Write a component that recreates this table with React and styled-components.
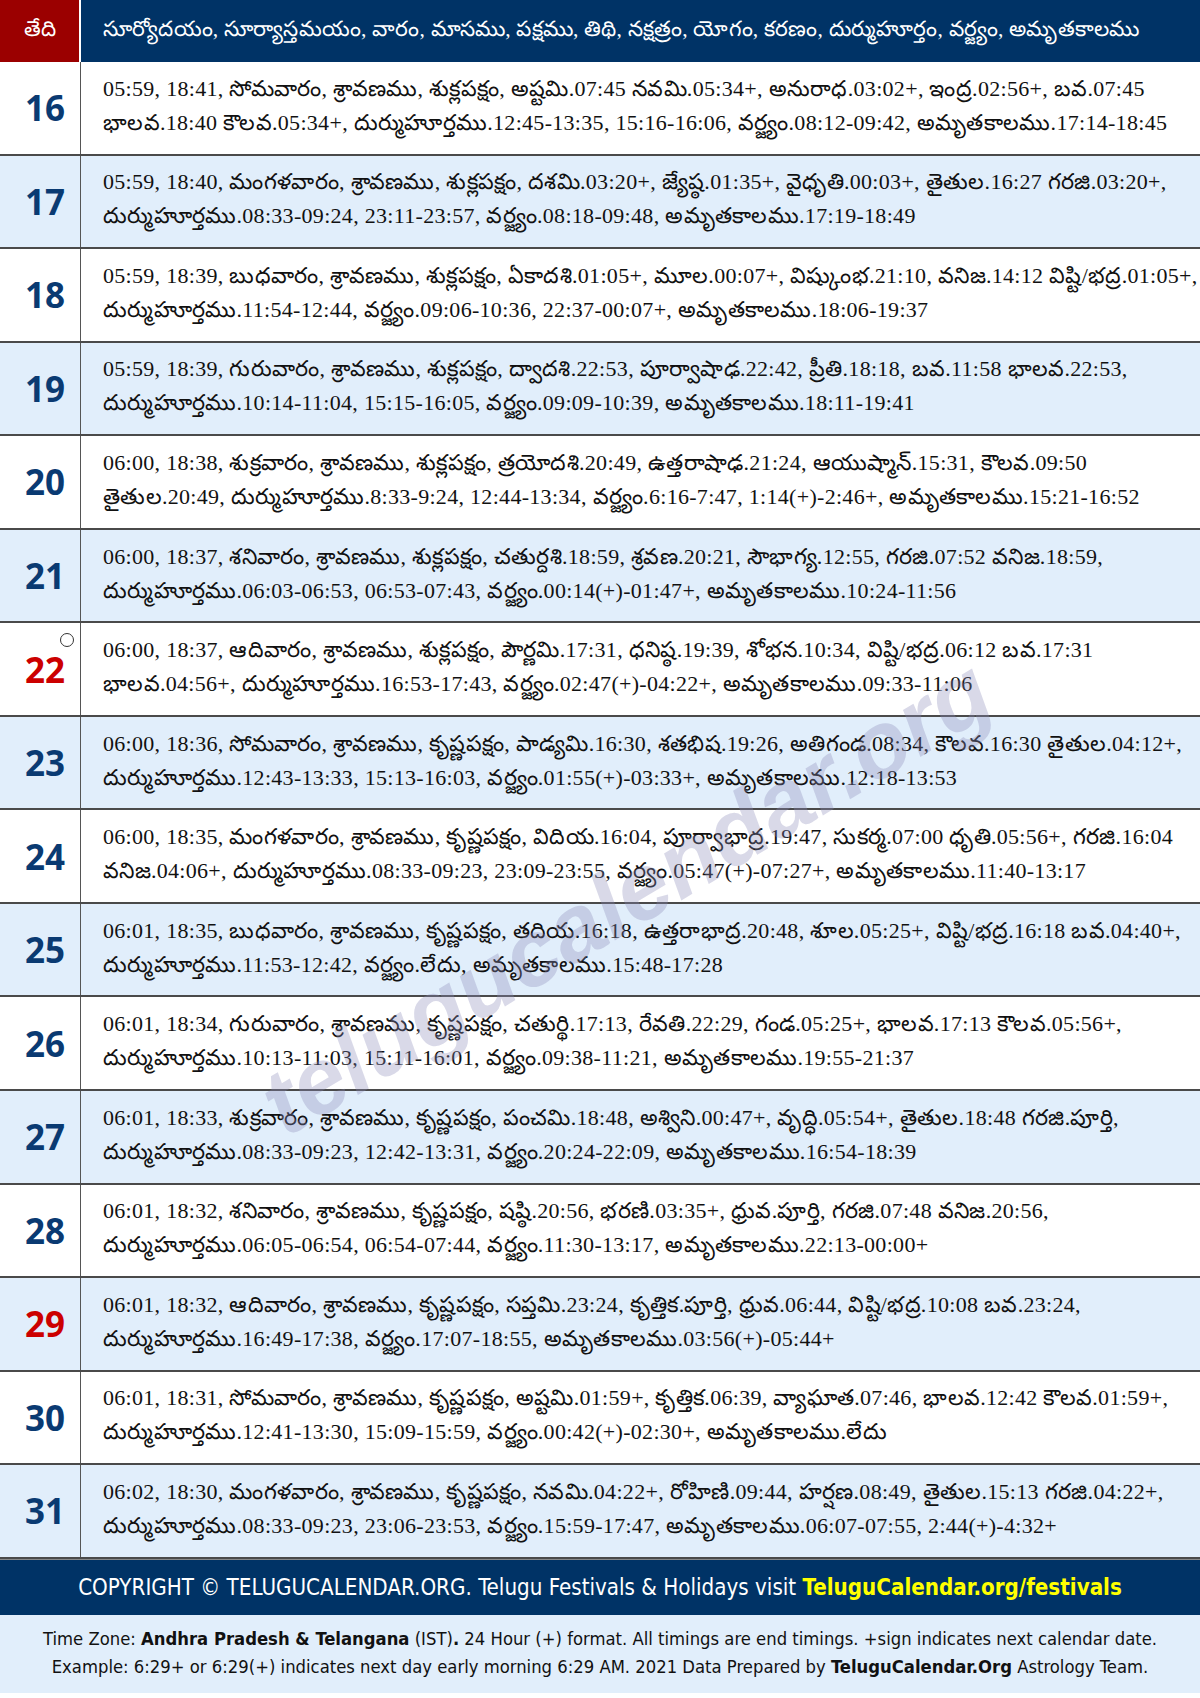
import React from "react";
import styled, { createGlobalStyle } from "styled-components";

const Global = createGlobalStyle`
  html, body { margin: 0; padding: 0; background: #ffffff; }
  body { width: 1200px; }
  * { box-sizing: border-box; }
`;

const Page = styled.div`
  position: relative;
  width: 1200px;
  overflow: hidden;
  font-family: "Liberation Serif", "Noto Sans", serif;
  color: #111;
`;

const HeaderRow = styled.div`
  display: grid;
  grid-template-columns: 81px 1fr;
  height: 62px;
`;

const DateHead = styled.div`
  background: #9b0000;
  color: #fff;
  display: flex;
  align-items: center;
  justify-content: center;
  font-size: 21.5px;
  border-right: 2px solid #ffffff;
`;

const MainHead = styled.div`
  background: #003366;
  color: #fff;
  display: flex;
  align-items: center;
  padding-left: 22px;
  font-size: 21.5px;
  letter-spacing: 0.2px;
  white-space: nowrap;
`;

const Row = styled.div`
  display: grid;
  grid-template-columns: 81px 1fr;
  height: 93.56px;
  background: ${(p) => (p.$alt ? "#e1eefb" : "#ffffff")};
  border-bottom: 2px solid #4a4a4a;
`;

const DateCell = styled.div`
  position: relative;
  display: flex;
  align-items: center;
  justify-content: flex-end;
  padding-right: 15px;
  border-right: 1.5px solid #555;
  font-family: "Noto Sans", "DejaVu Sans", sans-serif;
  font-weight: 700;
  font-size: 35px;
  color: ${(p) => (p.$holiday ? "#cc0000" : "#0a3a72")};
`;

const MoonMark = styled.span`
  position: absolute;
  top: 10px;
  right: 6px;
  width: 14px;
  height: 14px;
  border: 1.5px solid #333;
  border-radius: 50%;
  background: #fff;
`;

const TextCell = styled.div`
  display: flex;
  flex-direction: column;
  justify-content: center;
  padding: 0 0 4px 22px;
  font-size: 22px;
  letter-spacing: 0.3px;
  line-height: 34px;
`;

const Line = styled.div`
  white-space: nowrap;
`;

const FooterBand = styled.div`
  background: #003366;
  height: 56px;
  display: flex;
  align-items: center;
  justify-content: center;
  color: #fff;
  font-family: "DejaVu Sans Condensed", "DejaVu Sans", sans-serif;
  font-size: 22.2px;
  border-top: 1px solid #888;
`;

const Yellow = styled.span`
  color: #ffff00;
  font-weight: 700;
`;

const Notes = styled.div`
  background: #e1eefb;
  padding: 10px 0 12px;
  text-align: center;
  font-family: "DejaVu Sans Condensed", "DejaVu Sans", sans-serif;
  font-size: 18.3px;
  line-height: 28px;
  color: #111;
`;

const Watermark = styled.div`
  position: absolute;
  left: 626px;
  top: 897px;
  transform: translate(-50%, -50%) rotate(-31deg);
  font-family: "Liberation Sans", "DejaVu Sans", sans-serif;
  font-weight: 700;
  font-style: italic;
  font-size: 93px;
  color: rgba(140, 140, 185, 0.33);
  white-space: nowrap;
  pointer-events: none;
`;

const rows = [
  {
    d: 16,
    l1: "05:59, 18:41, సోమవారం, శ్రావణము, శుక్లపక్షం, అష్టమి.07:45 నవమి.05:34+, అనురాధ.03:02+, ఇంద్ర.02:56+, బవ.07:45",
    l2: "భాలవ.18:40 కౌలవ.05:34+, దుర్ముహూర్తము.12:45-13:35, 15:16-16:06, వర్జ్యం.08:12-09:42, అమృతకాలము.17:14-18:45",
  },
  {
    d: 17,
    l1: "05:59, 18:40, మంగళవారం, శ్రావణము, శుక్లపక్షం, దశమి.03:20+, జ్యేష్ఠ.01:35+, వైధృతి.00:03+, తైతుల.16:27 గరజి.03:20+,",
    l2: "దుర్ముహూర్తము.08:33-09:24, 23:11-23:57, వర్జ్యం.08:18-09:48, అమృతకాలము.17:19-18:49",
  },
  {
    d: 18,
    l1: "05:59, 18:39, బుధవారం, శ్రావణము, శుక్లపక్షం, ఏకాదశి.01:05+, మూల.00:07+, విష్కుంభ.21:10, వనిజ.14:12 విష్టి/భద్ర.01:05+,",
    l2: "దుర్ముహూర్తము.11:54-12:44, వర్జ్యం.09:06-10:36, 22:37-00:07+, అమృతకాలము.18:06-19:37",
  },
  {
    d: 19,
    l1: "05:59, 18:39, గురువారం, శ్రావణము, శుక్లపక్షం, ద్వాదశి.22:53, పూర్వాషాఢ.22:42, ప్రీతి.18:18, బవ.11:58 భాలవ.22:53,",
    l2: "దుర్ముహూర్తము.10:14-11:04, 15:15-16:05, వర్జ్యం.09:09-10:39, అమృతకాలము.18:11-19:41",
  },
  {
    d: 20,
    l1: "06:00, 18:38, శుక్రవారం, శ్రావణము, శుక్లపక్షం, త్రయోదశి.20:49, ఉత్తరాషాఢ.21:24, ఆయుష్మాన్.15:31, కౌలవ.09:50",
    l2: "తైతుల.20:49, దుర్ముహూర్తము.8:33-9:24, 12:44-13:34, వర్జ్యం.6:16-7:47, 1:14(+)-2:46+, అమృతకాలము.15:21-16:52",
  },
  {
    d: 21,
    l1: "06:00, 18:37, శనివారం, శ్రావణము, శుక్లపక్షం, చతుర్దశి.18:59, శ్రవణ.20:21, సౌభాగ్య.12:55, గరజి.07:52 వనిజ.18:59,",
    l2: "దుర్ముహూర్తము.06:03-06:53, 06:53-07:43, వర్జ్యం.00:14(+)-01:47+, అమృతకాలము.10:24-11:56",
  },
  {
    d: 22,
    red: true,
    moon: true,
    l1: "06:00, 18:37, ఆదివారం, శ్రావణము, శుక్లపక్షం, పౌర్ణమి.17:31, ధనిష్ఠ.19:39, శోభన.10:34, విష్టి/భద్ర.06:12 బవ.17:31",
    l2: "భాలవ.04:56+, దుర్ముహూర్తము.16:53-17:43, వర్జ్యం.02:47(+)-04:22+, అమృతకాలము.09:33-11:06",
  },
  {
    d: 23,
    l1: "06:00, 18:36, సోమవారం, శ్రావణము, కృష్ణపక్షం, పాడ్యమి.16:30, శతభిష.19:26, అతిగండ.08:34, కౌలవ.16:30 తైతుల.04:12+,",
    l2: "దుర్ముహూర్తము.12:43-13:33, 15:13-16:03, వర్జ్యం.01:55(+)-03:33+, అమృతకాలము.12:18-13:53",
  },
  {
    d: 24,
    l1: "06:00, 18:35, మంగళవారం, శ్రావణము, కృష్ణపక్షం, విదియ.16:04, పూర్వాభాద్ర.19:47, సుకర్మ.07:00 ధృతి.05:56+, గరజి.16:04",
    l2: "వనిజ.04:06+, దుర్ముహూర్తము.08:33-09:23, 23:09-23:55, వర్జ్యం.05:47(+)-07:27+, అమృతకాలము.11:40-13:17",
  },
  {
    d: 25,
    l1: "06:01, 18:35, బుధవారం, శ్రావణము, కృష్ణపక్షం, తదియ.16:18, ఉత్తరాభాద్ర.20:48, శూల.05:25+, విష్టి/భద్ర.16:18 బవ.04:40+,",
    l2: "దుర్ముహూర్తము.11:53-12:42, వర్జ్యం.లేదు, అమృతకాలము.15:48-17:28",
  },
  {
    d: 26,
    l1: "06:01, 18:34, గురువారం, శ్రావణము, కృష్ణపక్షం, చతుర్థి.17:13, రేవతి.22:29, గండ.05:25+, భాలవ.17:13 కౌలవ.05:56+,",
    l2: "దుర్ముహూర్తము.10:13-11:03, 15:11-16:01, వర్జ్యం.09:38-11:21, అమృతకాలము.19:55-21:37",
  },
  {
    d: 27,
    l1: "06:01, 18:33, శుక్రవారం, శ్రావణము, కృష్ణపక్షం, పంచమి.18:48, అశ్విని.00:47+, వృద్ధి.05:54+, తైతుల.18:48 గరజి.పూర్తి,",
    l2: "దుర్ముహూర్తము.08:33-09:23, 12:42-13:31, వర్జ్యం.20:24-22:09, అమృతకాలము.16:54-18:39",
  },
  {
    d: 28,
    l1: "06:01, 18:32, శనివారం, శ్రావణము, కృష్ణపక్షం, షష్ఠి.20:56, భరణి.03:35+, ధ్రువ.పూర్తి, గరజి.07:48 వనిజ.20:56,",
    l2: "దుర్ముహూర్తము.06:05-06:54, 06:54-07:44, వర్జ్యం.11:30-13:17, అమృతకాలము.22:13-00:00+",
  },
  {
    d: 29,
    red: true,
    l1: "06:01, 18:32, ఆదివారం, శ్రావణము, కృష్ణపక్షం, సప్తమి.23:24, కృత్తిక.పూర్తి, ధ్రువ.06:44, విష్టి/భద్ర.10:08 బవ.23:24,",
    l2: "దుర్ముహూర్తము.16:49-17:38, వర్జ్యం.17:07-18:55, అమృతకాలము.03:56(+)-05:44+",
  },
  {
    d: 30,
    l1: "06:01, 18:31, సోమవారం, శ్రావణము, కృష్ణపక్షం, అష్టమి.01:59+, కృత్తిక.06:39, వ్యాఘాత.07:46, భాలవ.12:42 కౌలవ.01:59+,",
    l2: "దుర్ముహూర్తము.12:41-13:30, 15:09-15:59, వర్జ్యం.00:42(+)-02:30+, అమృతకాలము.లేదు",
  },
  {
    d: 31,
    l1: "06:02, 18:30, మంగళవారం, శ్రావణము, కృష్ణపక్షం, నవమి.04:22+, రోహిణి.09:44, హర్షణ.08:49, తైతుల.15:13 గరజి.04:22+,",
    l2: "దుర్ముహూర్తము.08:33-09:23, 23:06-23:53, వర్జ్యం.15:59-17:47, అమృతకాలము.06:07-07:55, 2:44(+)-4:32+",
  },
];

export default function App() {
  return (
    <>
      <Global />
      <Page>
        <HeaderRow>
          <DateHead>తేది</DateHead>
          <MainHead>
            సూర్యోదయం, సూర్యాస్తమయం, వారం, మాసము, పక్షము, తిథి, నక్షత్రం, యోగం, కరణం, దుర్ముహూర్తం, వర్జ్యం, అమృతకాలము
          </MainHead>
        </HeaderRow>
        {rows.map((r, i) => (
          <Row key={r.d} $alt={i % 2 === 1}>
            <DateCell $holiday={r.red}>
              {r.d}
              {r.moon && <MoonMark />}
            </DateCell>
            <TextCell>
              <Line>{r.l1}</Line>
              <Line>{r.l2}</Line>
            </TextCell>
          </Row>
        ))}
        <FooterBand>
          <span>
            COPYRIGHT © TELUGUCALENDAR.ORG. Telugu Festivals &amp; Holidays visit{" "}
            <Yellow>TeluguCalendar.org/festivals</Yellow>
          </span>
        </FooterBand>
        <Notes>
          <div>
            Time Zone: <b>Andhra Pradesh &amp; Telangana</b> (IST)<b>.</b> 24 Hour (+) format. All timings are end timings. +sign indicates next calendar date.
          </div>
          <div>
            Example: 6:29+ or 6:29(+) indicates next day early morning 6:29 AM. 2021 Data Prepared by <b>TeluguCalendar.Org</b> Astrology Team.
          </div>
        </Notes>
        <Watermark>telugucalendar.org</Watermark>
      </Page>
    </>
  );
}
